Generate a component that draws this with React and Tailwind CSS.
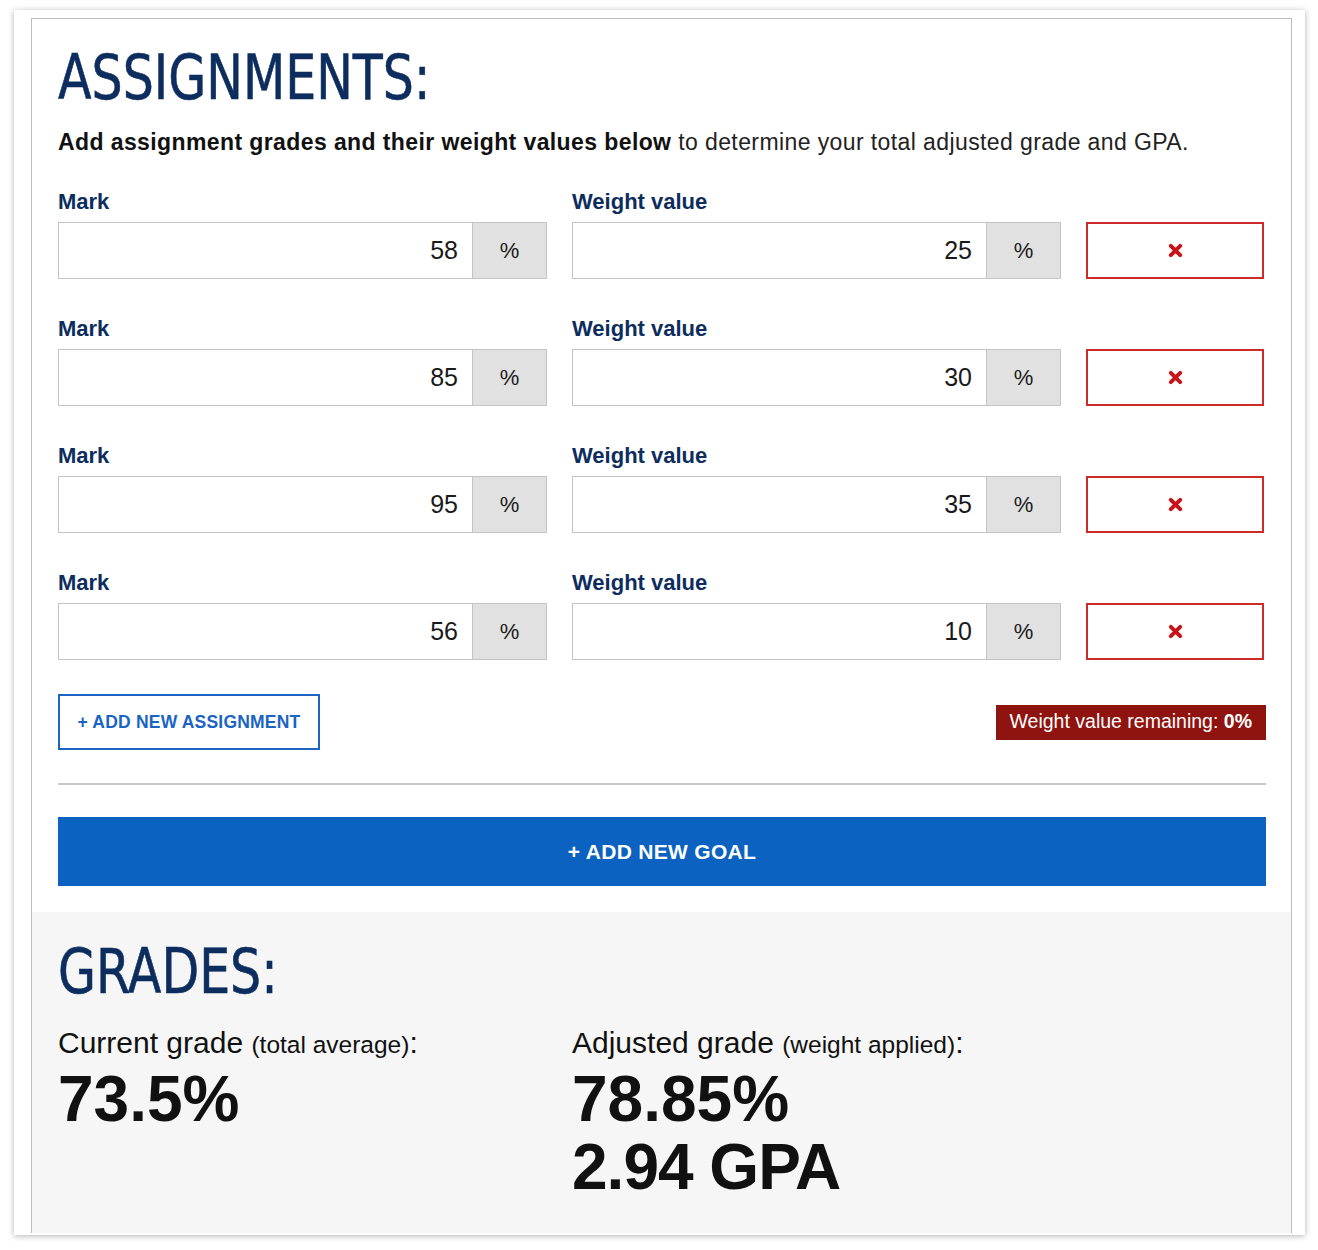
import React from 'react';

const headFont = { fontFamily: '"DejaVu Sans Condensed", "DejaVu Sans", sans-serif' };
const bodyFont = { fontFamily: '"Liberation Sans", Arial, sans-serif' };

const rows = [
  { mark: 58, weight: 25 },
  { mark: 85, weight: 30 },
  { mark: 95, weight: 35 },
  { mark: 56, weight: 10 },
];

function CrossIcon() {
  return (
    <svg width="15" height="15" viewBox="0 0 16 16" aria-hidden="true">
      <path d="M3 3 L13 13 M13 3 L3 13" stroke="#c8131b" strokeWidth="4.2" strokeLinecap="round" />
    </svg>
  );
}

function PercentField({ value }) {
  return (
    <div className="flex h-[57px] w-[489px] border border-[#c4c4c4] bg-white">
      <div className="flex-1 flex items-center justify-end pr-[14px] text-[25px] text-[#1a1a1a]">{value}</div>
      <div className="w-[74px] border-l border-[#c4c4c4] bg-[#e1e1e1] flex items-center justify-center text-[22px] text-[#1a1a1a]">
        %
      </div>
    </div>
  );
}

function AssignmentRow({ mark, weight }) {
  return (
    <div className="flex items-end gap-x-[25px] mb-[38px]">
      <div className="w-[489px]">
        <div className="text-[22px] leading-[24px] font-bold text-[#0c2d5e] mb-[8px]">Mark</div>
        <PercentField value={mark} />
      </div>
      <div className="w-[489px]">
        <div className="text-[22px] leading-[24px] font-bold text-[#0c2d5e] mb-[8px]">Weight value</div>
        <PercentField value={weight} />
      </div>
      <button className="w-[178px] h-[57px] border-2 border-[#cf2a2a] bg-white flex items-center justify-center">
        <CrossIcon />
      </button>
    </div>
  );
}

export default function App() {
  return (
    <div className="min-h-[1250px] bg-white pt-[10px] pl-[14px]" style={bodyFont}>
      <div className="w-[1291px] bg-white shadow-[0_1px_6px_rgba(0,0,0,0.3)] pl-[17px] pr-[13px] pt-[8px] pb-[2px]">
        <div className="border-l border-t border-r border-[#bcbcbc]">
          {/* assignments */}
          <div className="pl-[26px] pr-[25px] pt-[24px] pb-[26px]">
            <h1
              className="text-[63px] leading-[70px] text-[#0c2d5e] origin-left scale-x-[0.865] whitespace-nowrap [-webkit-text-stroke:0.6px_#0c2d5e]"
              style={{ ...headFont, fontStretch: 'condensed' }}
            >
              ASSIGNMENTS:
            </h1>
            <p className="mt-[15px] text-[23px] leading-[28px] tracking-[0.4px] text-[#222]">
              <span className="font-bold text-[#111]">Add assignment grades and their weight values below</span> to
              determine your total adjusted grade and GPA.
            </p>

            <div className="mt-[34px]">
              {rows.map((r, i) => (
                <AssignmentRow key={i} mark={r.mark} weight={r.weight} />
              ))}
            </div>

            <div className="-mt-[4px] flex items-center justify-between">
              <button className="w-[262px] h-[56px] border-2 border-[#1b64c3] text-[#1b64c3] font-bold text-[17.5px] tracking-[0.2px]">
                + ADD NEW ASSIGNMENT
              </button>
              <div className="h-[35px] px-[14px] bg-[#8f130f] text-white text-[19.5px] flex items-center">
                Weight value remaining:&nbsp;<span className="font-bold">0%</span>
              </div>
            </div>

            <div className="mt-[33px] h-[2px] bg-[#c9c9c9]" />

            <button className="mt-[32px] w-full h-[69px] bg-[#0b62c0] text-white font-bold text-[21px] tracking-[0.3px]">
              + ADD NEW GOAL
            </button>
          </div>

          {/* grades */}
          <div className="bg-[#f5f6f5] pl-[26px] pr-[25px] pt-[25px] pb-[32px]">
            <h2
              className="text-[63px] leading-[70px] text-[#0c2d5e] origin-left scale-x-[0.865] whitespace-nowrap [-webkit-text-stroke:0.6px_#0c2d5e]"
              style={{ ...headFont, fontStretch: 'condensed' }}
            >
              GRADES:
            </h2>
            <div className="mt-[19px] grid grid-cols-[514px_1fr] text-[#111]">
              <div>
                <div className="text-[30px] leading-[34px]">
                  Current grade <span className="text-[24.5px]">(total average)</span>:
                </div>
                <div className="mt-[3px] text-[64px] leading-[68px] font-bold">73.5%</div>
              </div>
              <div>
                <div className="text-[30px] leading-[34px]">
                  Adjusted grade <span className="text-[24.5px]">(weight applied)</span>:
                </div>
                <div className="mt-[3px] text-[64px] leading-[68px] font-bold">78.85%</div>
                <div className="text-[64px] leading-[68px] font-bold tracking-[-1px]">2.94 GPA</div>
              </div>
            </div>
          </div>
        </div>
      </div>
    </div>
  );
}
